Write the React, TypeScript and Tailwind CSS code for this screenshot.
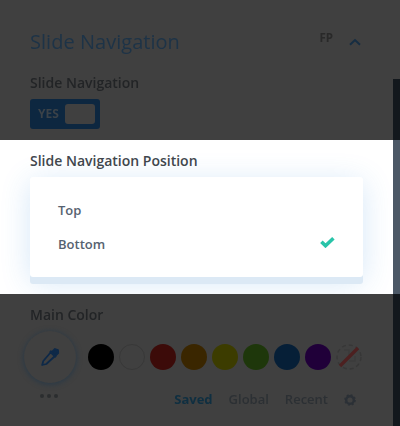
import React from 'react';

const swatches = [
  'bg-black',
  'border border-[#383838] bg-[#404040]',
  'bg-[#3c0b09]',
  'bg-[#3a2600]',
  'bg-[#3c3c00]',
  'bg-[#1e370b]',
  'bg-[#061f37]',
  'bg-[#200039]',
];

function Header() {
  return (
    <section className="flex h-[140px] bg-[#404040]">
      <div className="w-[393px] pl-[30px] pr-[30px] pt-[27px] blur-[0.6px]">
        <div className="flex h-[30px] items-center">
          <h2 className="text-[20px] font-medium leading-[30px] tracking-[0.03px] text-[#1d3347]">Slide Navigation</h2>
          <span className="mb-[9px] ml-auto text-[11.5px] font-bold text-[#292929]">FP</span>
          <svg className="ml-[16px] mr-[2px] h-[8px] w-[12px]" viewBox="0 0 12 8" fill="none" stroke="#162d42" strokeWidth="2">
            <path d="M1 6.7 6 2l5 4.7" />
          </svg>
        </div>
        <div className="mt-[16px] text-[14px] font-semibold leading-[20px] text-[#222426]">Slide Navigation</div>
        <div className="mt-[6px] flex h-[30px] w-[70px] items-center justify-between rounded-[3px] bg-[#0d2740] pl-[8px] pr-[5px]">
          <span className="text-[12px] font-bold text-[#3b4248]">YES</span>
          <span className="h-[20px] w-[30px] rounded-[3px] bg-[#404040]" />
        </div>
      </div>
      <div className="mt-[79px] w-[7px] bg-[#13181d]" />
    </section>
  );
}

function PositionSelect() {
  return (
    <section className="flex h-[154px] overflow-hidden bg-white">
      <div className="w-[393px] overflow-hidden px-[30px] pt-[10px]">
        <div className="text-[14px] font-semibold leading-[21px] text-[#40464c]">Slide Navigation Position</div>
        <div className="mt-[6px] h-[100px] w-[333px] rounded-[3px] bg-white pl-[28px] pr-[28px] pt-[17px] text-[13px] font-semibold text-[#566270] shadow-[0_7px_0_#dce9f5,0_5px_30px_rgba(43,135,218,0.2)]">
          <div className="flex h-[34px] items-center">Top</div>
          <div className="flex h-[34px] items-center justify-between">
            Bottom
            <svg className="mb-[5px] mr-[0.5px] h-[11px] w-[15px]" viewBox="0 0 15 11" fill="none" stroke="#29c4a9" strokeWidth="3.6">
              <path d="m1.4 4.7 4.1 4L13.4 1.3" />
            </svg>
          </div>
        </div>
      </div>
      <div className="w-[7px] bg-[#4c5866]" />
    </section>
  );
}

function MainColor() {
  return (
    <section className="flex h-[132px] overflow-hidden bg-[#404040]">
      <div className="w-[393px] pl-[24px] pr-[30px] pt-[11px] blur-[0.6px]">
        <div className="pl-[6px] text-[14px] font-semibold leading-[20px] text-[#222426]">Main Color</div>
        <div className="mt-[6px] flex h-[52px] items-center">
          <div className="flex size-[52px] shrink-0 items-center justify-center rounded-full bg-[#404040] shadow-[0_1px_5px_1px_#2c3a46]">
            <svg className="size-[20px]" viewBox="0 0 20 20" fill="none" stroke="#0e2948" strokeWidth="1.8" strokeLinejoin="round">
              <path d="m11 5 4 4-8.7 8-4.1 1 1.1-4L11 5Z" />
              <path d="m12 5 3-3 3 1 .2 3-3.2 3Z" fill="#0e2948" />
              <path d="m10 4 6 6" strokeWidth="2.5" />
            </svg>
          </div>
          <div className="ml-[12px] flex gap-[5px]">
            {swatches.map((color) => (
              <span key={color} className={`size-[26px] rounded-full ${color}`} />
            ))}
            <svg className="size-[26px]" viewBox="0 0 26 26" fill="none">
              <circle cx="13" cy="13" r="12" stroke="#373737" strokeWidth="1.4" strokeDasharray="4 3" />
              <path d="M8 6h5v5M13 17h6v-5" stroke="#3b3b3b" strokeWidth="1.5" />
              <path d="M4 22 22 4" stroke="#4d2020" strokeWidth="3.2" />
            </svg>
          </div>
        </div>
        <div className="flex h-[36px] pl-[16px]">
          <div className="mt-[10.5px] flex gap-[3px]">
            <span className="size-[4px] rounded-full bg-[#2b2d2f]" />
            <span className="size-[4px] rounded-full bg-[#2b2d2f]" />
            <span className="size-[4px] rounded-full bg-[#2b2d2f]" />
          </div>
          <div className="ml-auto mt-[7px] flex h-[20px] items-center gap-[16px] pr-[7px] text-[13px] font-semibold text-[#2c3034]">
            <span className="font-bold text-[#0f2f41]">Saved</span>
            <span>Global</span>
            <span>Recent</span>
            <svg className="size-[12px]" viewBox="0 0 12 12" fill="none" stroke="#2b3036">
              <circle cx="6" cy="6" r="3.8" strokeWidth="2.4" />
              <circle cx="6" cy="6" r="5.2" strokeWidth="1.3" strokeDasharray="2 2.08" />
            </svg>
          </div>
        </div>
      </div>
      <div className="w-[7px] bg-[#13181d]" />
    </section>
  );
}

export default function App() {
  return (
    <main className="h-[426px] w-[400px] overflow-hidden font-['Open_Sans',sans-serif]">
      <Header />
      <PositionSelect />
      <MainColor />
    </main>
  );
}
